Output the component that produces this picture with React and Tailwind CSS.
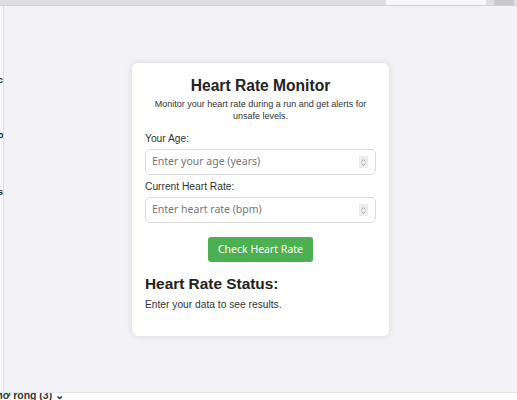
import { useState } from "react";

function Spinner() {
  return (
    <div className="w-[9px] h-[12px] bg-[#ececec] rounded-[1px] flex flex-col items-center justify-center gap-[1px]">
      <svg width="5" height="3" viewBox="0 0 5 3" fill="none" stroke="#9a9a9a" strokeWidth="0.8">
        <path d="M0.5 2.5 L2.5 0.6 L4.5 2.5" />
      </svg>
      <svg width="5" height="3" viewBox="0 0 5 3" fill="none" stroke="#9a9a9a" strokeWidth="0.8">
        <path d="M0.5 0.5 L2.5 2.4 L4.5 0.5" />
      </svg>
    </div>
  );
}

function Field({ label, placeholder, value, onChange, top }) {
  return (
    <div className={`flex flex-col gap-[4px] ${top}`}>
      <label className="text-[10.24px] leading-[12px] text-[#333]">{label}</label>
      <div className="h-[26px] flex items-center border border-[#dcdcdc] rounded-[5px] pl-[6px] pr-[7px] bg-white">
        <input
          type="text"
          value={value}
          onChange={(e) => onChange(e.target.value)}
          placeholder={placeholder}
          className="flex-1 min-w-0 outline-none bg-transparent text-[10.5px] text-[#333] placeholder:text-[#767676] font-['Noto_Sans',sans-serif]"
        />
        <Spinner />
      </div>
    </div>
  );
}

export default function App() {
  const [age, setAge] = useState("");
  const [rate, setRate] = useState("");

  return (
    <div className="w-[517px] h-[400px] flex flex-col overflow-hidden bg-[#f3f3f7] font-['Liberation_Sans',Arial,sans-serif]">
      {/* browser chrome remnants */}
      <div className="h-[6px] flex bg-[#dfdfe3] border-b border-[#d2d2d6]">
        <div className="flex-1" />
        <div className="w-[100px] bg-[#f7f7f9] mr-[8px]" />
        <div className="w-[20px] bg-[#c9c9cd] mr-[3px]" />
      </div>

      <div className="flex-1 flex min-h-0">
        <div className="w-[4px] bg-[#f7f7f9] border-r border-[#dcdce0] flex flex-col text-[9px] font-bold text-[#222] leading-none overflow-hidden">
          <span className="mt-[70px] -ml-[2px]">c</span>
          <span className="mt-[46px] -ml-[2px]">ơ</span>
          <span className="mt-[48px] -ml-[2px]">s</span>
          <span className="mt-[48px] -ml-[2px] text-[6px] font-normal">ı</span>
          <span className="mt-[74px] -ml-[2px] text-[6px] font-normal">ı</span>
        </div>

        <div className="flex-1 flex justify-center pt-[57px]">
          <div className="w-[257px] h-fit bg-white rounded-[6px] shadow-[0_0_7px_rgba(0,0,0,0.12)] px-[13px] pt-[14px] pb-[25px]">
            <h1 className="text-center text-[15.6px] leading-[18px] font-bold text-[#222]">Heart Rate Monitor</h1>
            <p className="mt-[3px] text-center text-[9px] leading-[12px] text-[#333]">
              Monitor your heart rate during a run and get alerts for unsafe levels.
            </p>

            <Field label="Your Age:" placeholder="Enter your age (years)" value={age} onChange={setAge} top="mt-[11px]" />
            <Field label="Current Heart Rate:" placeholder="Enter heart rate (bpm)" value={rate} onChange={setRate} top="mt-[6px]" />

            <div className="flex justify-center mt-[14px]">
              <button className="h-[25px] w-[105px] bg-[#4caf50] rounded-[3px] text-white text-[10.5px] font-['Noto_Sans',sans-serif]">
                Check Heart Rate
              </button>
            </div>

            <h2 className="mt-[13px] text-[15.4px] leading-[18px] font-bold text-[#222]">Heart Rate Status:</h2>
            <p className="mt-[6px] text-[10.24px] leading-[12px] text-[#333]">Enter your data to see results.</p>
          </div>
        </div>
      </div>

      <div className="h-[8px] bg-white border-t border-[#e4e4e8] overflow-hidden">
        <div className="-mt-[4px] -ml-[6px] text-[10.5px] font-bold text-[#333] leading-[12px] whitespace-nowrap">
          Mở rộng (3) ⌄
        </div>
      </div>
    </div>
  );
}
